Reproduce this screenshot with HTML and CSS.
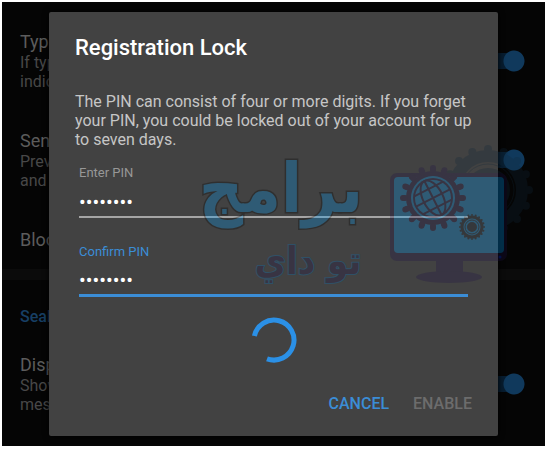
FILE: index.html
```html
<!DOCTYPE html>
<html lang="en">
<head>
    <meta charset="UTF-8">
    <meta name="viewport" content="width=device-width, initial-scale=1.0">
    <title>Registration Lock</title>
    <link rel="stylesheet" href="styles.css">
</head>
<body>

    <div class="screen">
        <!-- settings list behind the dialog -->
        <div class="settings">
            <label class="row">
                <span class="row-text">
                    <span class="row-title">Typ</span>
                    <span class="row-desc">If typ<br>indic</span>
                </span>
                <input class="switch" type="checkbox" checked>
            </label>
            <label class="row">
                <span class="row-text">
                    <span class="row-title">Sen</span>
                    <span class="row-desc">Prev<br>and</span>
                </span>
                <input class="switch" type="checkbox" checked>
            </label>
            <div class="row row-single">
                <span class="row-title">Bloc</span>
            </div>
            <div class="divider"></div>
            <h2 class="section">Seal</h2>
            <label class="row">
                <span class="row-text">
                    <span class="row-title">Disp</span>
                    <span class="row-desc">Show<br>mes</span>
                </span>
                <input class="switch" type="checkbox" checked>
            </label>
        </div>

        <div class="overlay">
            <form class="dialog" role="dialog" aria-labelledby="dialog-title">
                <h1 class="title" id="dialog-title">Registration Lock</h1>
                <p class="message">The PIN can consist of four or more digits. If you forget your PIN, you could be locked out of your account for up to seven days.</p>
                <div class="field">
                    <label for="pin">Enter PIN</label>
                    <input type="password" id="pin" value="12345678">
                </div>
                <div class="field field-active">
                    <label for="confirm-pin">Confirm PIN</label>
                    <input type="password" id="confirm-pin" value="12345678">
                </div>
                <svg class="spinner" viewBox="0 0 46 46">
                    <path d="M3.4 19A20 20 0 1 1 16 41.8"/>
                </svg>
                <div class="actions">
                    <button class="btn" type="button">CANCEL</button>
                    <button class="btn" type="button" disabled>ENABLE</button>
                </div>
            </form>
        </div>

        <svg class="watermark" viewBox="200 120 345 180">
            <text class="brand" x="281" y="212">برامج</text>
            <text class="brand-sub" x="308" y="274">تو داي</text>

            <!-- back gear -->
            <g class="gear-back">
                <circle cx="488" cy="190" r="34" stroke-width="12"/>
                <circle class="teeth" cx="488" cy="190" r="41" stroke-width="8" pathLength="16"/>
                <circle cx="488" cy="190" r="26" stroke-width="1"/>
                <circle cx="488" cy="190" r="11" stroke-width="22"/>
            </g>

            <!-- monitor -->
            <rect class="dark" x="390" y="173" width="117" height="88" rx="7"/>
            <rect class="blue" x="394" y="177" width="110" height="76" rx="4"/>
            <path class="dark" d="M436 260h27v13h-27z"/>
            <ellipse class="dark" cx="449" cy="277" rx="33" ry="6"/>
            <circle class="led" cx="500" cy="257" r="1.5"/>

            <!-- globe gear -->
            <circle class="dark" cx="433" cy="198" r="27"/>
            <circle class="teeth teeth-dark" cx="433" cy="198" r="30" stroke-width="6" pathLength="16"/>
            <circle class="teeth teeth-dark" cx="433" cy="198" r="28" stroke-width="6" pathLength="16"/>
            <circle class="blue" cx="433" cy="198" r="22"/>
            <circle class="dark" cx="433" cy="198" r="20"/>
            <circle class="blue" cx="433" cy="198" r="18"/>
            <g class="globe" transform="rotate(-27 433 198)">
                <path d="M433 179v38M414 198h38M417 188h32M417 208h32"/>
                <ellipse cx="433" cy="198" rx="10" ry="19"/>
            </g>

            <!-- small gear -->
            <g class="gear-small">
                <circle cx="472" cy="227" r="10" stroke-width="3"/>
                <circle class="teeth" cx="472" cy="227" r="12" stroke-width="2" pathLength="20"/>
                <circle cx="472" cy="227" r="7" stroke-width="1"/>
                <circle cx="472" cy="227" r="2.5" stroke-width="5"/>
            </g>
        </svg>
    </div>

</body>
</html>
```

FILE: styles.css
```css
* {
    box-sizing: border-box;
}
body {
    background-color: #fff;
    font-family: Roboto, Arial, sans-serif;
    margin: 0;
    padding: 2px 5px 3px 2px;
}
.screen {
    position: relative;
    background-color: #050505;
    min-height: calc(100vh - 5px);
    overflow: hidden;
}
.settings {
    padding-top: 28px;
}
.row {
    display: flex;
    align-items: center;
    justify-content: space-between;
    height: 61px;
    margin-bottom: 38px;
    padding: 0 20px 0 18px;
    white-space: nowrap;
}
.row:last-child {
    margin-bottom: 0;
}
.row-text {
    display: flex;
    flex-direction: column;
}
.row-title {
    color: #5c5c5c;
    font-size: 18px;
    line-height: 23px;
}
.row-desc {
    color: #484848;
    font-size: 16px;
    line-height: 19px;
}
.row-single {
    height: 23px;
    margin-bottom: 18px;
}
.divider {
    height: 11px;
    background-color: #0b0b0b;
}
.section {
    color: #173f64;
    font-size: 16px;
    font-weight: 500;
    line-height: 20px;
    margin: 27px 0 26px 18px;
}
.switch {
    appearance: none;
    width: 42px;
    height: 22px;
    margin: 0;
    border-radius: 11px;
    background: radial-gradient(circle at 31px 11px, #10395c 10px, transparent 11px),
        linear-gradient(#071d30, #071d30) 0 3px / 32px 16px no-repeat;
}
.overlay {
    position: absolute;
    inset: 0;
    padding: 10px 47px;
}
.dialog {
    display: flex;
    flex-direction: column;
    background-color: #424242;
    border-radius: 2px;
    padding: 22px 26px 15px;
    box-shadow: 0 0 6px #000;
}
.title {
    color: #fff;
    font-size: 22px;
    font-weight: 500;
    line-height: 28px;
    margin: 0 0 30px;
}
.message {
    color: #c6c6c6;
    font-size: 16px;
    line-height: 19px;
    margin: 0 0 16px;
}
.field {
    display: flex;
    flex-direction: column;
    margin: 0 4px 26px;
}
.field label {
    color: #979797;
    font-size: 13px;
    line-height: 16px;
}
.field input {
    height: 37px;
    padding: 6px 0 0;
    border: none;
    border-bottom: 2px solid #a5a5a5;
    outline: none;
    background: none;
    color: #fff;
    font-family: Roboto, Arial, sans-serif;
    font-size: 20px;
}
.field-active {
    margin-bottom: 20px;
}
.field-active label {
    color: #3b8dd6;
}
.field-active input {
    border-bottom: 3px solid #3b8dd6;
}
.spinner {
    align-self: center;
    width: 46px;
    height: 46px;
    fill: none;
    stroke: #2b90e6;
    stroke-width: 5;
}
.actions {
    display: flex;
    justify-content: flex-end;
    gap: 8px;
    margin: 23px -8px 0 0;
}
.btn {
    padding: 8px;
    border: none;
    background: none;
    color: #3b8dd6;
    cursor: pointer;
    font-family: Roboto, Arial, sans-serif;
    font-size: 16px;
    font-weight: 500;
    line-height: 19px;
}
.btn:disabled {
    color: #6c6c6c;
    cursor: default;
}
.watermark {
    position: absolute;
    top: 118px;
    right: 0;
    width: 345px;
    height: 180px;
    opacity: 0.27;
    overflow: visible;
    pointer-events: none;
}
.brand,
.brand-sub {
    direction: rtl;
    font-family: "DejaVu Sans Condensed", "DejaVu Sans", sans-serif;
    font-weight: bold;
    text-anchor: middle;
    paint-order: stroke;
}
.brand {
    fill: #00a0ff;
    stroke: #000;
    stroke-width: 3;
    font-size: 68px;
}
.brand-sub {
    fill: #1e1246;
    stroke: #0078c8;
    stroke-width: 2;
    font-size: 38px;
}
.dark {
    fill: #1e1246;
}
.blue {
    fill: #00a0ff;
}
.led {
    fill: #0030ff;
}
.teeth {
    stroke-dasharray: 0 1;
    stroke-linecap: round;
}
.teeth-dark {
    fill: none;
    stroke: #1e1246;
}
.globe {
    fill: none;
    stroke: #1e1246;
    stroke-width: 2;
}
.gear-back {
    fill: none;
    stroke: #10283a;
}
.gear-small {
    fill: none;
    stroke: #14202c;
}
```
